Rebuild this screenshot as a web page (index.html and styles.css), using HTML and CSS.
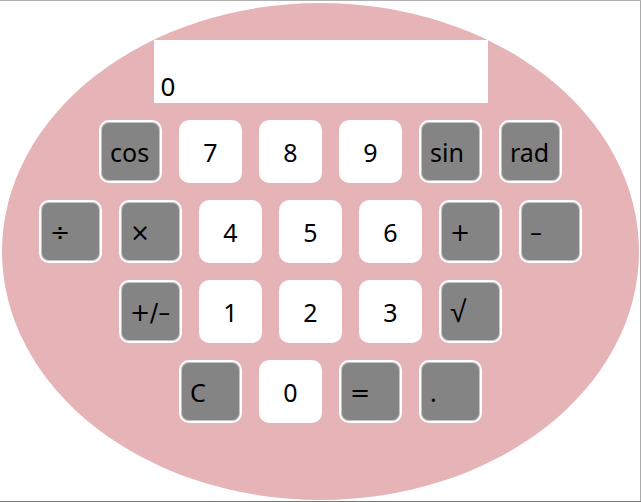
FILE: index.html
```html
<!DOCTYPE html>
<html lang="en">
<head>
  <meta charset="utf-8">
  <meta name="viewport" content="width=device-width, initial-scale=1">
  <title>Calculator</title>
  <link rel="stylesheet" href="styles.css">
</head>
<body>
  <main class="calculator">
    <input class="display" type="text" value="0" aria-label="Result" readonly>
    <div class="row row-right">
      <button class="key function" type="button">cos</button>
      <button class="key digit" type="button">7</button>
      <button class="key digit" type="button">8</button>
      <button class="key digit" type="button">9</button>
      <button class="key function" type="button">sin</button>
      <button class="key function" type="button">rad</button>
    </div>
    <div class="row row-left">
      <button class="key function symbol" type="button">÷</button>
      <button class="key function symbol" type="button">×</button>
      <button class="key digit" type="button">4</button>
      <button class="key digit" type="button">5</button>
      <button class="key digit" type="button">6</button>
      <button class="key function symbol" type="button">+</button>
      <button class="key function symbol" type="button">–</button>
    </div>
    <div class="row row-left">
      <button class="key function symbol" type="button">+/–</button>
      <button class="key digit" type="button">1</button>
      <button class="key digit" type="button">2</button>
      <button class="key digit" type="button">3</button>
      <button class="key function radical" type="button">√</button>
    </div>
    <div class="row row-right">
      <button class="key function" type="button">C</button>
      <button class="key digit" type="button">0</button>
      <button class="key function symbol" type="button">=</button>
      <button class="key function" type="button">.</button>
    </div>
  </main>
</body>
</html>
```
FILE: styles.css
```css
* {
  box-sizing: border-box;
}

body {
  margin: 0;
  min-height: 100vh;
  padding: 3px 2px 2px;
  background: #fff;
  box-shadow: inset 0 1px #b2b2b2, inset 0 -1px #777, inset -1px 0 #aaa;
  font-family: "Noto Sans", "Open Sans", sans-serif;
}

.calculator {
  display: flex;
  flex-direction: column;
  align-items: center;
  gap: 17px;
  padding: 37px 0 77px;
  border-radius: 50%;
  background: #e6b3b6;
}

.display {
  width: 334px;
  height: 63px;
  padding: 29px 7px 0;
  border: 0;
  border-radius: 0;
  background: #fff;
  color: #000;
  font: 26px/32px "Noto Sans", "Open Sans", sans-serif;
  outline: 0;
}

.row {
  display: flex;
  gap: 17px;
}

/* Alternate rows are staggered by a quarter of a key. */
.row-right {
  padding-left: 20px;
}

.row-left {
  padding-right: 20px;
}

.key {
  width: 63px;
  height: 63px;
  padding: 0;
  border: 2px solid #fff;
  border-radius: 10px;
  color: #000;
  font: 25px/32px "Noto Sans", "Open Sans", sans-serif;
  white-space: nowrap;
}

.digit {
  background: #fff;
  text-align: center;
}

.function {
  padding-left: 9px;
  background: #848484;
  box-shadow: inset 0 0 0 1px #c4c4c4;
  text-align: left;
}

.symbol {
  padding-top: 2px;
  font-family: "DejaVu Sans", sans-serif;
  font-size: 24px;
}

.radical {
  font-family: "Liberation Sans", sans-serif;
  font-size: 30px;
}
```
